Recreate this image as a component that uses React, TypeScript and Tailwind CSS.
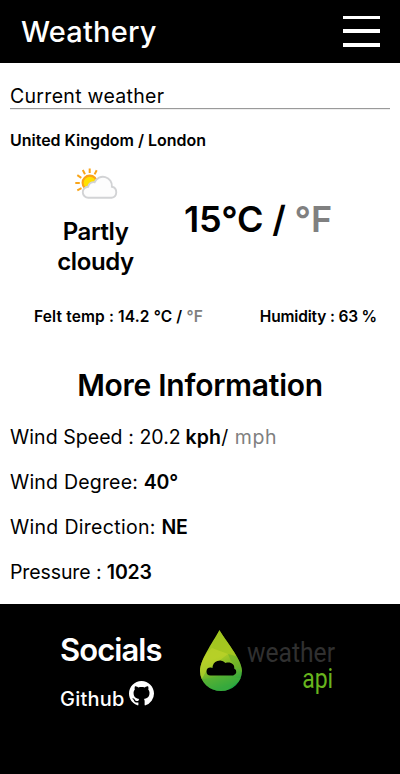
import React from "react";

function MenuIcon() {
  return (
    <svg width="38" height="31" viewBox="0 0 38 31" fill="#fff" shapeRendering="crispEdges">
      <rect width="37" height="3" />
      <rect y="13" width="37" height="4" />
      <rect y="27" width="37" height="4" />
    </svg>
  );
}

function PartlyCloudyIcon() {
  return (
    <svg width="64" height="64" viewBox="0 0 64 64" fill="none">
      <g stroke="#f9a51a" strokeWidth="2" strokeLinecap="butt">
        <path d="M24.7 16.500V21M17.800 18l2.200 4.200M31.700 18.200l-2.100 4.200M12.300 23.200l4 2.600M10.300 31h4.500M12.300 38.300l4.200-2.200" />
      </g>
      <circle cx="24.800" cy="30.800" r="7.200" fill="#ffe100" stroke="#fba316" strokeWidth="2.100" />
      <path d="M23.500 45.800a5.500 5.500 0 0 1-.3-11.100a5.500 5.500 0 0 1 6.500-4.500a9 9 0 0 1 17.200 4.600a5.600 5.600 0 0 1-.4 11Z" fill="#fdfdfd" stroke="#d2d3d5" strokeWidth="1.900" />
    </svg>
  );
}

function GithubIcon() {
  return (
    <svg width="25" height="25" viewBox="0 0 16 16" fill="#fff">
      <path d="M8 0C3.58 0 0 3.58 0 8c0 3.54 2.29 6.53 5.47 7.59.4.07.55-.17.55-.38 0-.19-.01-.82-.01-1.49-2.01.37-2.53-.49-2.69-.94-.09-.23-.48-.94-.82-1.13-.28-.15-.68-.52-.01-.53.63-.01 1.08.58 1.23.82.72 1.21 1.87.87 2.33.66.07-.52.28-.87.51-1.07-1.78-.2-3.64-.89-3.64-3.95 0-.87.31-1.59.82-2.15-.08-.2-.36-1.02.08-2.12 0 0 .67-.21 2.2.82.64-.18 1.32-.27 2-.27s1.36.09 2 .27c1.53-1.04 2.2-.82 2.2-.82.44 1.1.16 1.92.08 2.12.51.56.82 1.27.82 2.15 0 3.07-1.87 3.75-3.65 3.95.29.25.54.73.54 1.48 0 1.07-.01 1.93-.01 2.2 0 .21.15.46.55.38A8.01 8.01 0 0 0 16 8c0-4.42-3.58-8-8-8Z" />
    </svg>
  );
}

function DropLogo() {
  return (
    <svg width="43" height="62" viewBox="0 0 43 62">
      <defs>
        <linearGradient id="drop" x1="0" y1="0" x2="0.250" y2="1">
          <stop offset="0" stopColor="#9ac31f" />
          <stop offset="0.500" stopColor="#aacb25" />
          <stop offset="0.720" stopColor="#78b829" />
          <stop offset="1" stopColor="#20a344" />
        </linearGradient>
        <clipPath id="dropClip">
          <path d="M19.500 0C24 9 42 29 42 41a21 20 0 0 1-42 0C0 29 15 9 19.500 0Z" />
        </clipPath>
      </defs>
      <g clipPath="url(#dropClip)">
        <path d="M0 0h43v62H0Z" fill="url(#drop)" />
        <path d="M19 0 43 28 28 24 12 18Z" fill="#a4c51e" opacity=".6" />
        <path d="M0 30 12 18 28 24 7 40 0 52Z" fill="#c0d42a" opacity=".6" />
        <path d="M28 24 43 28V43L31 31Z" fill="#6cb027" opacity=".6" />
        <path d="M0 50 20 46 43 48 25 62H0Z" fill="#4bb036" opacity=".5" />
      </g>
      <path d="M10.500 45.500a3.800 3.800 0 0 1 0-8q1 0 2 .4a7.500 7.500 0 0 1 13-4.900c5-1.500 9.400 1.100 8.700 5.500a3.700 3.700 0 0 1-1 7Z" fill="#000" />
    </svg>
  );
}

export default function App() {
  return (
    <div className="flex h-[774px] w-[400px] flex-col overflow-hidden bg-white font-['Inter','Liberation_Sans',sans-serif] text-black">
      <header className="flex h-[63px] shrink-0 justify-between bg-black pl-[21px] pr-[19px] text-white">
        <h1 className="mt-[11px] whitespace-nowrap text-[29px] leading-[42px] font-medium tracking-[0.2px]">Weathery</h1>
        <button className="mt-4 h-[31px]" aria-label="Menu"><MenuIcon /></button>
      </header>

      <main className="flex h-[541px] shrink-0 flex-col px-[10px]">
        <p className="mt-[21px] h-[24px] whitespace-nowrap text-[19.500px] leading-6 tracking-[0.300px]">Current weather</p>
        <hr className="h-[2px] border-t border-b border-t-[#9a9a9a] border-b-[#eeeeee]" />
        <p className="mt-[20px] whitespace-nowrap text-[16px] leading-5 font-semibold tracking-[-0.02px]">United Kingdom / London</p>

        <section className="mt-[2px] flex h-[124px]">
          <div className="flex w-[171px] flex-col items-center">
            <div className="h-[65px] shrink-0 pl-[2px]"><PartlyCloudyIcon /></div>
            <h2 className="w-[100px] shrink-0 text-center text-[24px] leading-[30px] font-semibold tracking-[-0.4px]">Partly cloudy</h2>
          </div>
          <h2 className="mt-[43px] ml-[3px] whitespace-nowrap text-[36px] leading-[48px] font-semibold tracking-[-0.2px]">
            15°C / <span className="text-[#808080]">°F</span>
          </h2>
        </section>

        <section className="mt-[31px] flex justify-between pr-[13px] pl-6 text-[15.500px] leading-5 font-semibold whitespace-nowrap">
          <p className="tracking-[0.150px]">Felt temp : 14.2 °C / <span className="text-[#808080]">°F</span></p>
          <p className="tracking-[-0.170px]">Humidity : 63 %</p>
        </section>

        <h2 className="mt-[38px] text-center text-[30px] leading-10 font-semibold tracking-[-0.260px]">More Information</h2>
        <div className="mt-[20px] flex flex-col gap-[21px] text-[19.500px] leading-6 whitespace-nowrap">
          <p className="tracking-[0.060px]">Wind Speed : 20.2 <b className="-ml-px font-semibold tracking-[0.200px]">kph</b>/ <span className="ml-px tracking-[0.600px] text-[#808080]">mph</span></p>
          <p className="tracking-[0.200px]">Wind Degree: <b className="font-semibold tracking-[-0.200px]">40°</b></p>
          <p className="tracking-[0.300px]">Wind Direction: <b className="font-semibold tracking-[-0.200px]">NE</b></p>
          <p className="tracking-[-0.100px]">Pressure : <b className="font-semibold tracking-[-0.200px]">1023</b></p>
        </div>
      </main>

      <footer className="flex h-[170px] shrink-0 bg-black pl-[60px] text-white">
        <div className="w-[140px]">
          <h2 className="mt-[26px] text-[31px] leading-10 font-semibold tracking-[-0.950px]">Socials</h2>
          <a className="mt-[11px] flex gap-[4px] text-[20px] leading-9 font-medium tracking-[0.200px] whitespace-nowrap">
            <span className="w-[65px]">Github</span><GithubIcon />
          </a>
        </div>
        <div className="mt-[26px] flex h-[64px]">
          <DropLogo />
          <div className="ml-[4px] flex w-[88px] flex-col font-['Roboto','Open_Sans',sans-serif] whitespace-nowrap">
            <span className="mt-[10px] h-[25px] w-[98px] origin-left scale-x-[0.880] text-[28px] leading-[25px] text-[#303030]">weather</span>
            <span className="mt-px h-[25px] origin-right scale-x-[0.820] self-end pr-[2px] text-[28px] leading-[25px] text-[#68b51e]">api</span>
          </div>
        </div>
      </footer>
    </div>
  );
}
